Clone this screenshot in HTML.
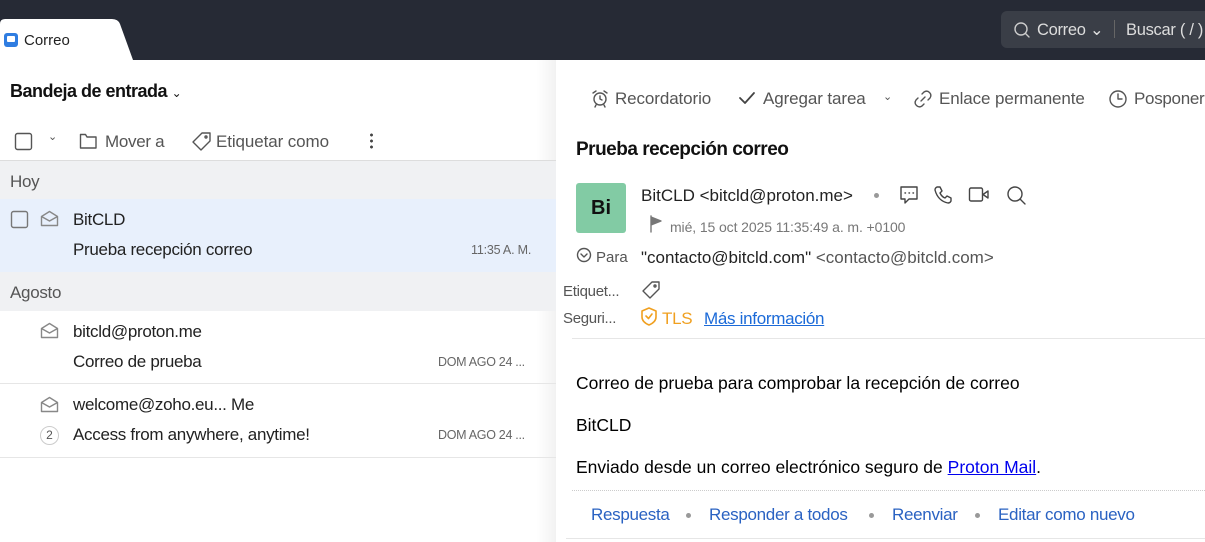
<!DOCTYPE html>
<html><head><meta charset="utf-8"><style>
*{margin:0;padding:0;box-sizing:border-box}
body{width:1205px;height:542px;overflow:hidden;background:#fff;font-family:"Liberation Sans",sans-serif;color:#222;position:relative}
.a{position:absolute;white-space:nowrap}
.top{left:0;top:0;width:1205px;height:60px;background:#262a35}
.g{color:#555}
svg{position:absolute;fill:none;stroke:#555;stroke-width:1.4;stroke-linecap:round;stroke-linejoin:round}
.t16{font-size:16.5px;letter-spacing:-0.3px}
.t17{font-size:17px;letter-spacing:-0.3px}
.blue{color:#2a62c2}
</style></head><body>
<div class="a top"></div>
<svg style="left:0;top:18px" width="135" height="43" viewBox="0 0 135 43"><path d="M0 42V6Q0 1 5 1H112Q118 1 120 6L133 42Z" fill="#fff" stroke="none"/></svg>
<div class="a" style="left:4px;top:33px;width:14px;height:14px;background:#2f7de1;border-radius:3px"></div>
<div class="a" style="left:7px;top:36px;width:8px;height:6px;background:#fff;border-radius:1px"></div>
<div class="a" style="left:24px;top:32px;font-size:15px;color:#222">Correo</div>
<div class="a" style="left:1001px;top:11px;width:210px;height:37px;background:#3a3e47;border-radius:6px"></div>
<svg style="left:1013px;top:21px;stroke:#ccc" width="18" height="18"><circle cx="8" cy="8" r="6"/><path d="M12.5 12.5L16 16"/></svg>
<div class="a t16" style="left:1037px;top:20px;color:#ddd">Correo ⌄</div>
<div class="a" style="left:1114px;top:20px;width:1px;height:18px;background:#666"></div>
<div class="a t16" style="left:1126px;top:21px;color:#ddd">Buscar ( / )</div>

<div class="a" style="left:536px;top:60px;width:20px;height:482px;background:linear-gradient(90deg,rgba(0,0,0,0),rgba(0,0,0,0.05))"></div>

<div class="a" style="left:10px;top:81px;font-size:18px;font-weight:bold;letter-spacing:-0.5px;color:#111">Bandeja de entrada <span style="font-size:12px;font-weight:normal">⌄</span></div>
<svg style="left:14px;top:132px;stroke:#555" width="20" height="20"><rect x="1.5" y="1.5" width="16" height="16" rx="2"/></svg>
<div class="a" style="left:48px;top:130px;font-size:11px;color:#555">⌄</div>
<svg style="left:79px;top:132px" width="20" height="18"><path d="M1.5 3V16H17V5H8L6.5 2.5H1.5Z"/></svg>
<div class="a t17 g" style="left:105px;top:132px">Mover a</div>
<svg style="left:191px;top:131px" width="22" height="22"><path d="M11 2H19V10L10 19L2 11Z"/><circle cx="15" cy="6" r="1"/></svg>
<div class="a t17 g" style="left:216px;top:132px;letter-spacing:-0.1px">Etiquetar como</div>
<div class="a" style="left:370px;top:132px;width:3px;height:18px;background:radial-gradient(circle,#444 1.3px,transparent 1.6px) 0 0/3px 6px"></div>

<div class="a" style="left:0;top:160px;width:556px;height:39px;background:#f0f1f3;border-top:1px solid #ddd"></div>
<div class="a t17" style="left:10px;top:172px;color:#555">Hoy</div>
<div class="a" style="left:0;top:199px;width:556px;height:73px;background:#e8f0fc"></div>
<svg style="left:10px;top:210px;stroke:#777" width="20" height="20"><rect x="1.5" y="1.5" width="16" height="16" rx="2"/></svg>
<svg style="left:40px;top:210px;stroke:#888" width="20" height="18"><path d="M1.5 6.5L9.5 1.5L17.5 6.5V15.5H1.5Z M1.5 6.5L9.5 11L17.5 6.5"/></svg>
<div class="a t17" style="left:73px;top:210px">BitCLD</div>
<div class="a t17" style="left:73px;top:240px">Prueba recepción correo</div>
<div class="a" style="left:471px;top:243px;font-size:12.5px;color:#666;letter-spacing:-0.2px">11:35 A. M.</div>
<div class="a" style="left:0;top:272px;width:556px;height:39px;background:#f0f1f3"></div>
<div class="a t17" style="left:10px;top:283px;color:#555">Agosto</div>
<svg style="left:40px;top:322px;stroke:#888" width="20" height="18"><path d="M1.5 6.5L9.5 1.5L17.5 6.5V15.5H1.5Z M1.5 6.5L9.5 11L17.5 6.5"/></svg>
<div class="a t17" style="left:73px;top:322px">bitcld@proton.me</div>
<div class="a t17" style="left:73px;top:352px">Correo de prueba</div>
<div class="a" style="left:438px;top:355px;font-size:12.5px;color:#666;letter-spacing:-0.3px">DOM AGO 24 ...</div>
<div class="a" style="left:0;top:383px;width:556px;height:1px;background:#e6e6e6"></div>
<svg style="left:40px;top:396px;stroke:#888" width="20" height="18"><path d="M1.5 6.5L9.5 1.5L17.5 6.5V15.5H1.5Z M1.5 6.5L9.5 11L17.5 6.5"/></svg>
<div class="a t17" style="left:73px;top:395px">welcome@zoho.eu... Me</div>
<div class="a" style="left:40px;top:426px;width:19px;height:19px;border:1px solid #ccc;border-radius:50%;font-size:12px;color:#555;text-align:center;line-height:17px">2</div>
<div class="a t17" style="left:73px;top:425px">Access from anywhere, anytime!</div>
<div class="a" style="left:438px;top:428px;font-size:12.5px;color:#666;letter-spacing:-0.3px">DOM AGO 24 ...</div>
<div class="a" style="left:0;top:457px;width:556px;height:1px;background:#e6e6e6"></div>

<svg style="left:591px;top:89px" width="18" height="19"><circle cx="9" cy="10" r="6"/><path d="M9 7V10L11 11M2 4L5 2M16 4L13 2M5 16L4 18M13 16L14 18"/></svg>
<div class="a t17 g" style="left:615px;top:89px;letter-spacing:-0.1px">Recordatorio</div>
<svg style="left:738px;top:90px;stroke:#444;stroke-width:1.8" width="18" height="16"><path d="M2 8L7 13L16 3"/></svg>
<div class="a t17 g" style="left:763px;top:89px;letter-spacing:-0.1px">Agregar tarea</div>
<div class="a g" style="left:883px;top:90px;font-size:11px">⌄</div>
<svg style="left:913px;top:89px" width="20" height="20"><path d="M8 12L12 8M9 5L11 3Q14 1 16.5 3.5Q19 6 17 9L15 11M11 15L9 17Q6 19 3.5 16.5Q1 14 3 11L5 9"/></svg>
<div class="a t17 g" style="left:939px;top:89px;letter-spacing:-0.1px">Enlace permanente</div>
<svg style="left:1108px;top:89px" width="20" height="20"><circle cx="10" cy="10" r="8"/><path d="M10 5V10H14"/></svg>
<div class="a t17 g" style="left:1134px;top:89px">Posponer</div>

<div class="a" style="left:576px;top:139px;font-size:19px;font-weight:bold;letter-spacing:-0.5px;color:#111">Prueba recepción correo</div>
<div class="a" style="left:576px;top:183px;width:50px;height:50px;background:#82cba4;border-radius:3px;font-size:20px;font-weight:bold;color:#111;text-align:center;line-height:50px">Bi</div>
<div class="a t17" style="left:641px;top:186px;letter-spacing:0">BitCLD &lt;bitcld@proton.me&gt;</div>
<div class="a" style="left:874px;top:193px;width:5px;height:5px;background:#999;border-radius:50%"></div>
<svg style="left:899px;top:185px;stroke:#444" width="20" height="20"><path d="M2 2H18V14H10L6 18V14H2Z"/><path d="M6 8H6.5M10 8H10.5M14 8H14.5"/></svg>
<svg style="left:933px;top:185px;stroke:#444" width="20" height="20"><path d="M4 2L7 2L9 6L7 8Q9 12 12 13L14 11L18 13V16Q17 18 15 18Q5 16 2 5Q2 3 4 2Z"/></svg>
<svg style="left:968px;top:186px;stroke:#444" width="24" height="18"><rect x="1.5" y="2" width="13" height="13" rx="1.5"/><path d="M15 8.5L20 5V12Z"/></svg>
<svg style="left:1006px;top:185px;stroke:#444" width="22" height="22"><circle cx="9" cy="9" r="7"/><path d="M14 14L19 19"/></svg>
<svg style="left:649px;top:215px;stroke:#777;fill:#777" width="14" height="18"><path d="M2 1V17M2 2L12 6L2 10Z"/></svg>
<div class="a" style="left:670px;top:219px;font-size:14px;color:#777;letter-spacing:-0.1px">mié, 15 oct 2025 11:35:49 a. m. +0100</div>
<svg style="left:576px;top:247px" width="16" height="16"><circle cx="8" cy="8" r="6.5"/><path d="M5 7L8 10L11 7"/></svg>
<div class="a" style="left:596px;top:249px;font-size:15px;color:#555">Para</div>
<div class="a t17" style="left:641px;top:248px;letter-spacing:0">"contacto@bitcld.com" <span style="color:#555">&lt;contacto@bitcld.com&gt;</span></div>
<div class="a" style="left:563px;top:283px;font-size:15px;color:#555;letter-spacing:-0.3px">Etiquet...</div>
<svg style="left:640px;top:280px" width="22" height="20"><path d="M12 2H19V9L10 18L3 11Z"/><circle cx="15" cy="6" r="1"/></svg>
<div class="a" style="left:563px;top:310px;font-size:15px;color:#555;letter-spacing:-0.3px">Seguri...</div>
<svg style="left:641px;top:307px;stroke:#f0a020;stroke-width:1.6" width="18" height="20"><path d="M8 1L15 4V10Q15 15 8 18Q1 15 1 10V4Z"/><path d="M5 9L7.5 11.5L11 7"/></svg>
<div class="a t17" style="left:662px;top:309px;color:#f0a020">TLS</div>
<div class="a t17" style="left:704px;top:309px;color:#1b6ad8;text-decoration:underline">Más información</div>
<div class="a" style="left:572px;top:338px;width:633px;height:1px;background:#e6e6e6"></div>

<div class="a" style="left:576px;top:373px;font-size:17.5px;color:#000">Correo de prueba para comprobar la recepción de correo</div>
<div class="a" style="left:576px;top:415px;font-size:17.5px;color:#000">BitCLD</div>
<div class="a" style="left:576px;top:457px;font-size:17.5px;color:#000">Enviado desde un correo electrónico seguro de <span style="color:#00e;text-decoration:underline">Proton Mail</span>.</div>
<div class="a" style="left:572px;top:490px;width:633px;border-top:1px dotted #ccc"></div>
<div class="a t17 blue" style="left:591px;top:505px">Respuesta</div>
<div class="a" style="left:686px;top:513px;width:5px;height:5px;background:#999;border-radius:50%"></div>
<div class="a t17 blue" style="left:709px;top:505px">Responder a todos</div>
<div class="a" style="left:869px;top:513px;width:5px;height:5px;background:#999;border-radius:50%"></div>
<div class="a t17 blue" style="left:892px;top:505px">Reenviar</div>
<div class="a" style="left:975px;top:513px;width:5px;height:5px;background:#999;border-radius:50%"></div>
<div class="a t17 blue" style="left:998px;top:505px">Editar como nuevo</div>
<div class="a" style="left:566px;top:538px;width:639px;height:1px;background:#e6e6e6"></div>
</body></html>
